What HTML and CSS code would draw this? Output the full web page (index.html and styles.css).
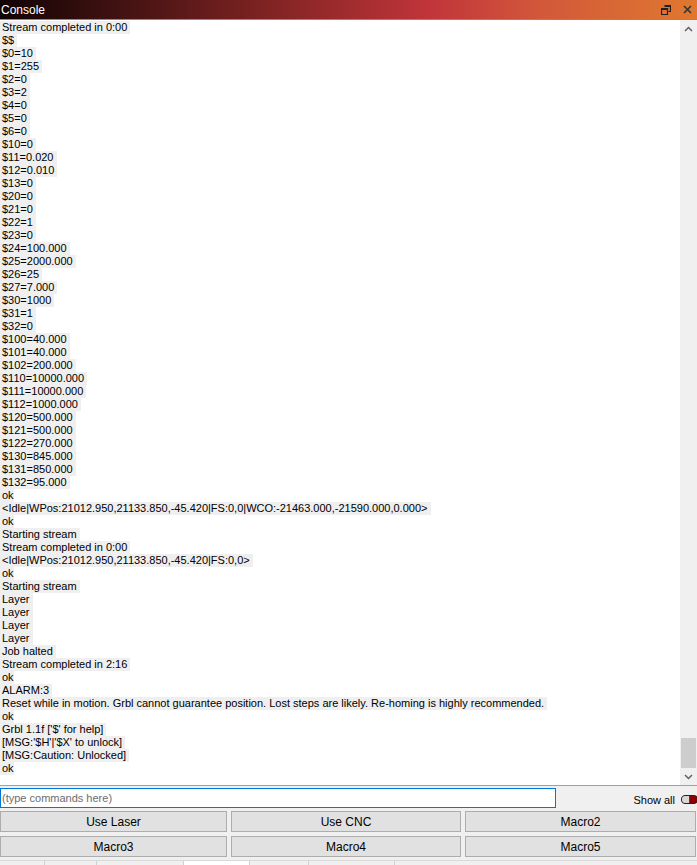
FILE: index.html
```html
<!DOCTYPE html>
<html lang="en">
<head>
    <meta charset="UTF-8">
    <meta name="viewport" content="width=device-width, initial-scale=1.0">
    <title>Console</title>
    <link rel="stylesheet" href="styles.css">
</head>
<body>
    <div class="window">
        <div class="titlebar">
            <span class="title">Console</span>
            <div class="title-icons">
                <svg width="10" height="10" viewBox="0 0 10 10"><path d="M3.5 0.5h6v6h-2M0.5 3.5h6v6h-6z M0.5 4.5h6 M3.5 1.5h6" fill="none" stroke="#222" stroke-width="1.2"/></svg>
                <svg width="9" height="9" viewBox="0 0 9 9"><path d="M1 1l7 7M8 1l-7 7" stroke="#333" stroke-width="1.6"/></svg>
            </div>
        </div>
        <div class="console">
            <div class="log">
                <div class="line"><span>Stream completed in 0:00 </span></div>
                <div class="line"><span>$$ </span></div>
                <div class="line"><span>$0=10 </span></div>
                <div class="line"><span>$1=255 </span></div>
                <div class="line"><span>$2=0 </span></div>
                <div class="line"><span>$3=2 </span></div>
                <div class="line"><span>$4=0 </span></div>
                <div class="line"><span>$5=0 </span></div>
                <div class="line"><span>$6=0 </span></div>
                <div class="line"><span>$10=0 </span></div>
                <div class="line"><span>$11=0.020 </span></div>
                <div class="line"><span>$12=0.010 </span></div>
                <div class="line"><span>$13=0 </span></div>
                <div class="line"><span>$20=0 </span></div>
                <div class="line"><span>$21=0 </span></div>
                <div class="line"><span>$22=1 </span></div>
                <div class="line"><span>$23=0 </span></div>
                <div class="line"><span>$24=100.000 </span></div>
                <div class="line"><span>$25=2000.000 </span></div>
                <div class="line"><span>$26=25 </span></div>
                <div class="line"><span>$27=7.000 </span></div>
                <div class="line"><span>$30=1000 </span></div>
                <div class="line"><span>$31=1 </span></div>
                <div class="line"><span>$32=0 </span></div>
                <div class="line"><span>$100=40.000 </span></div>
                <div class="line"><span>$101=40.000 </span></div>
                <div class="line"><span>$102=200.000 </span></div>
                <div class="line"><span>$110=10000.000 </span></div>
                <div class="line"><span>$111=10000.000 </span></div>
                <div class="line"><span>$112=1000.000 </span></div>
                <div class="line"><span>$120=500.000 </span></div>
                <div class="line"><span>$121=500.000 </span></div>
                <div class="line"><span>$122=270.000 </span></div>
                <div class="line"><span>$130=845.000 </span></div>
                <div class="line"><span>$131=850.000 </span></div>
                <div class="line"><span>$132=95.000 </span></div>
                <div class="line"><span>ok</span></div>
                <div class="line"><span>&lt;Idle|WPos:21012.950,21133.850,-45.420|FS:0,0|WCO:-21463.000,-21590.000,0.000&gt; </span></div>
                <div class="line"><span>ok</span></div>
                <div class="line"><span>Starting stream </span></div>
                <div class="line"><span>Stream completed in 0:00 </span></div>
                <div class="line"><span>&lt;Idle|WPos:21012.950,21133.850,-45.420|FS:0,0&gt; </span></div>
                <div class="line"><span>ok</span></div>
                <div class="line"><span>Starting stream </span></div>
                <div class="line"><span>Layer </span></div>
                <div class="line"><span>Layer </span></div>
                <div class="line"><span>Layer </span></div>
                <div class="line"><span>Layer </span></div>
                <div class="line"><span>Job halted </span></div>
                <div class="line"><span>Stream completed in 2:16 </span></div>
                <div class="line"><span>ok</span></div>
                <div class="line"><span>ALARM:3 </span></div>
                <div class="line"><span>Reset while in motion. Grbl cannot guarantee position. Lost steps are likely. Re-homing is highly recommended. </span></div>
                <div class="line"><span>ok</span></div>
                <div class="line"><span>Grbl 1.1f ['$' for help] </span></div>
                <div class="line"><span>[MSG:'$H'|'$X' to unlock] </span></div>
                <div class="line"><span>[MSG:Caution: Unlocked] </span></div>
                <div class="line"><span>ok</span></div>
            </div>
            <div class="scrollbar">
                <div class="arrow">
                    <svg width="9" height="6" viewBox="0 0 9 6"><path d="M1 5l3.5-3.5L8 5" fill="none" stroke="#606060" stroke-width="1.5"/></svg>
                </div>
                <div class="track">
                    <div class="thumb"></div>
                </div>
                <div class="arrow">
                    <svg width="9" height="6" viewBox="0 0 9 6"><path d="M1 1l3.5 3.5L8 1" fill="none" stroke="#606060" stroke-width="1.5"/></svg>
                </div>
            </div>
        </div>
        <div class="command-row">
            <input class="command" type="text" placeholder="(type commands here)">
            <span class="show-all">Show all</span>
            <span class="toggle"><span class="knob"></span></span>
        </div>
        <div class="buttons">
            <button>Use Laser</button>
            <button>Use CNC</button>
            <button>Macro2</button>
            <button>Macro3</button>
            <button>Macro4</button>
            <button>Macro5</button>
        </div>
        <div class="tabs">
            <div class="tab" style="width: 44px"></div>
            <div class="tab" style="width: 51px"></div>
            <div class="tab" style="width: 86px"></div>
            <div class="tab active" style="width: 65px"></div>
            <div class="tab" style="width: 58px"></div>
            <div class="tab" style="width: 85px"></div>
            <div class="tab rest"></div>
        </div>
    </div>
</body>
</html>
```

FILE: styles.css
```css
body {
    margin: 0;
    background: #f0f0f0;
    font-family: "Liberation Sans", Arial, sans-serif;
    font-size: 11px;
    color: #000;
}

.window {
    width: 697px;
    height: 865px;
    display: flex;
    flex-direction: column;
    overflow: hidden;
}

.titlebar {
    height: 19px;
    flex-shrink: 0;
    display: flex;
    align-items: center;
    justify-content: space-between;
    background: linear-gradient(90deg, #120404 0%, #4a1414 20%, #8a2626 42%, #c2353a 62%, #d2593a 78%, #e0782f 100%);
    border-bottom: 1px solid #8a8a8a;
}

.title {
    color: #fff;
    font-size: 12px;
    padding-left: 1px;
}

.title-icons {
    display: flex;
    align-items: center;
    gap: 12px;
    padding-right: 5px;
}

.console {
    flex: 1;
    min-height: 0;
    display: flex;
    background: #fff;
    border-bottom: 1px solid #a0a0a0;
}

.log {
    flex: 1;
    padding-top: 1px;
}

.line {
    height: 13px;
    line-height: 13px;
    white-space: pre;
}

.line span {
    display: inline-block;
    height: 13px;
    background: #efefef;
    padding-left: 2px;
}

.scrollbar {
    width: 17px;
    display: flex;
    flex-direction: column;
    background: #f0f0f0;
}

.arrow {
    height: 17px;
    display: flex;
    align-items: center;
    justify-content: center;
}

.track {
    flex: 1;
    display: flex;
    flex-direction: column;
    justify-content: flex-end;
    padding: 0 1px;
}

.thumb {
    height: 30px;
    background: #cdcdcd;
}

.command-row {
    height: 20px;
    flex-shrink: 0;
    margin-top: 2px;
    display: flex;
    align-items: center;
}

.command {
    width: 556px;
    height: 20px;
    box-sizing: border-box;
    border: 1px solid #0078d7;
    padding: 0 1px;
    font-family: inherit;
    font-size: 11px;
    outline: none;
}

.command::placeholder {
    color: #6d6d6d;
}

.show-all {
    margin-left: auto;
    font-size: 11px;
    padding-top: 3px;
}

.toggle {
    width: 17px;
    height: 9px;
    margin-left: 6px;
    margin-right: -1px;
    margin-top: 3px;
    box-sizing: border-box;
    border: 1px solid #222;
    border-radius: 4px;
    background: #8b0000;
    display: flex;
}

.knob {
    width: 7px;
    height: 7px;
    border-radius: 3px 0 0 3px;
    background: #d8d8d8;
    border-right: 1px solid #444;
}

.buttons {
    flex-shrink: 0;
    margin-top: 3px;
    display: grid;
    grid-template-columns: 227px 230px 231px;
    grid-auto-rows: 21px;
    column-gap: 4px;
    row-gap: 4px;
}

button {
    height: 21px;
    border: 1px solid #adadad;
    background: #e1e1e1;
    font-family: inherit;
    font-size: 12px;
    color: #000;
    padding: 0;
}

.tabs {
    flex-shrink: 0;
    margin-top: 3px;
    display: flex;
    height: 4px;
    border-top: 1px solid #d9d9d9;
}

.tab {
    border-right: 1px solid #d0d0d0;
    background: #f0f0f0;
}

.tab.active {
    background: #fff;
}

.tab.rest {
    flex: 1;
    border-right: none;
}
```
